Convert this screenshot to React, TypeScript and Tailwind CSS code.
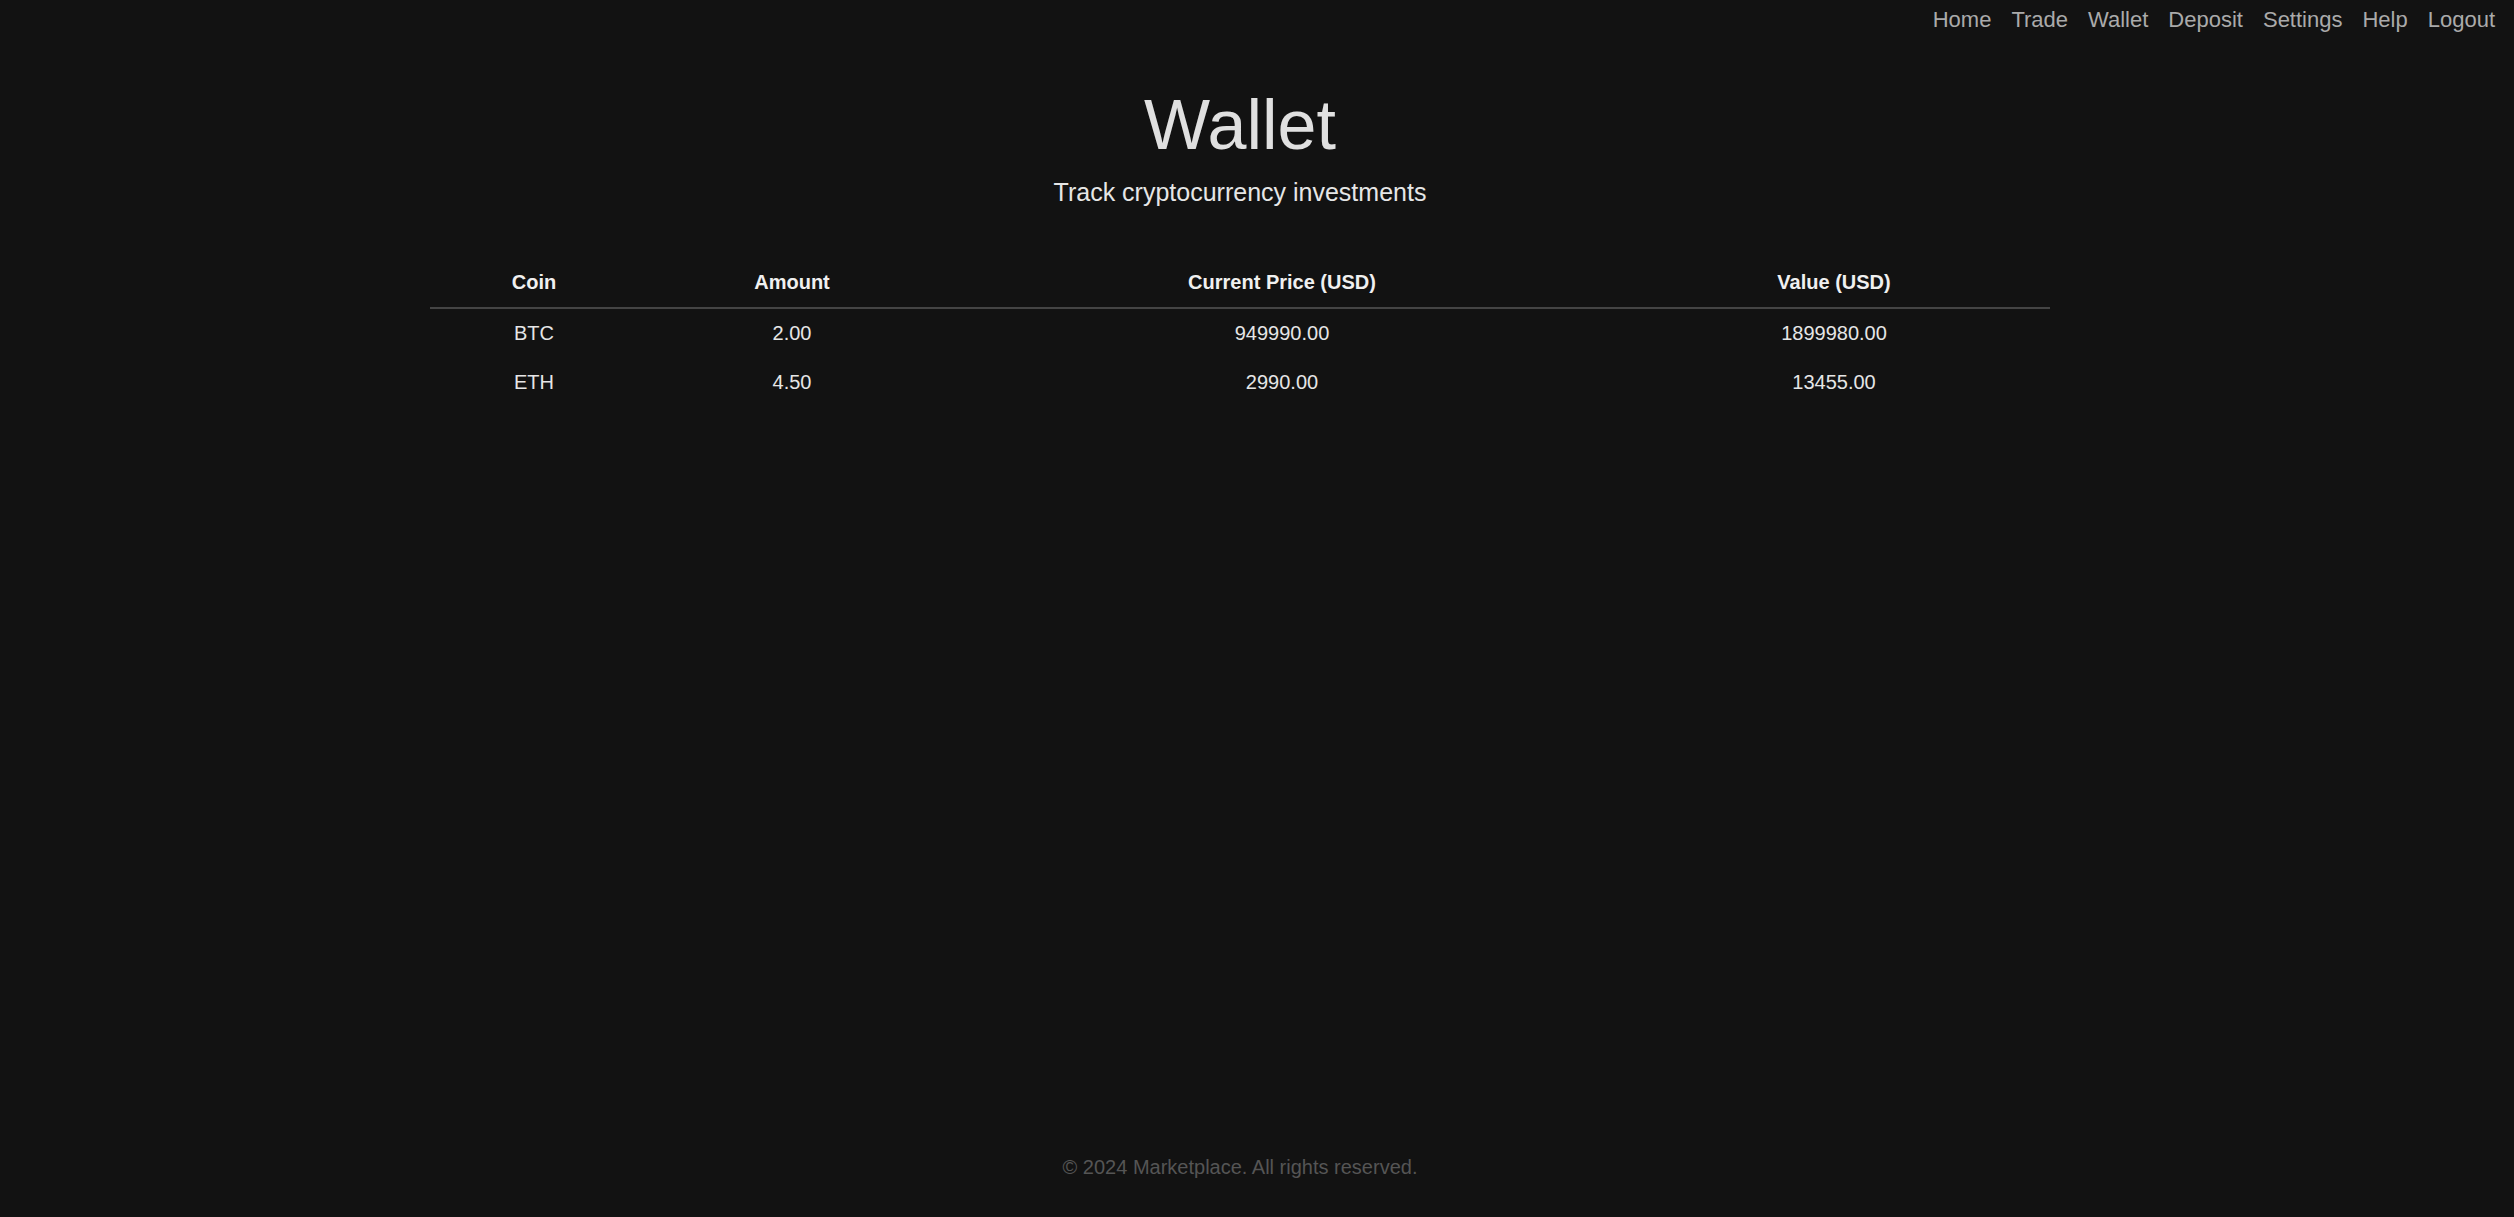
const links = ["Home", "Trade", "Wallet", "Deposit", "Settings", "Help", "Logout"];

const holdings = [
  { coin: "BTC", amount: "2.00", price: "949990.00", value: "1899980.00" },
  { coin: "ETH", amount: "4.50", price: "2990.00", value: "13455.00" },
];

const cols = "grid grid-cols-[208px_308px_672px_432px] text-center text-[20px] leading-[23px]";

const App = () => {
  return (
    <div className="min-h-screen flex flex-col bg-[#121212] font-['Liberation_Sans',Arial,sans-serif]">
      <nav className="flex justify-end gap-[20px] pt-[7px] pr-[19px] text-[22px] leading-[25px] text-[#aaaaaa]">
        {links.map((l) => (
          <a key={l} href="#" className="hover:text-white">
            {l}
          </a>
        ))}
      </nav>

      <main className="flex-1 flex flex-col items-center pr-[34px]">
        <h1 className="mt-[53px] text-[70px] leading-[80px] text-[#e0e0e0]">Wallet</h1>
        <p className="mt-[12px] text-[25px] leading-[30px] text-[#e6e6e6]">
          Track cryptocurrency investments
        </p>

        <div className="mt-[51px] w-[1620px]">
          <div className={`${cols} font-bold text-[#f0f0f0] border-b-2 border-[#444444]`}>
            <div className="py-[13px]">Coin</div>
            <div className="py-[13px]">Amount</div>
            <div className="py-[13px]">Current Price (USD)</div>
            <div className="py-[13px]">Value (USD)</div>
          </div>
          {holdings.map((h) => (
            <div key={h.coin} className={`${cols} text-[#e6e6e6]`}>
              <div className="py-[13px]">{h.coin}</div>
              <div className="py-[13px]">{h.amount}</div>
              <div className="py-[13px]">{h.price}</div>
              <div className="py-[13px]">{h.value}</div>
            </div>
          ))}
        </div>
      </main>

      <footer className="pr-[34px] pb-[38px] text-center text-[20px] leading-[23px] text-[#555555]">
        © 2024 Marketplace. All rights reserved.
      </footer>
    </div>
  );
};

export default App;
